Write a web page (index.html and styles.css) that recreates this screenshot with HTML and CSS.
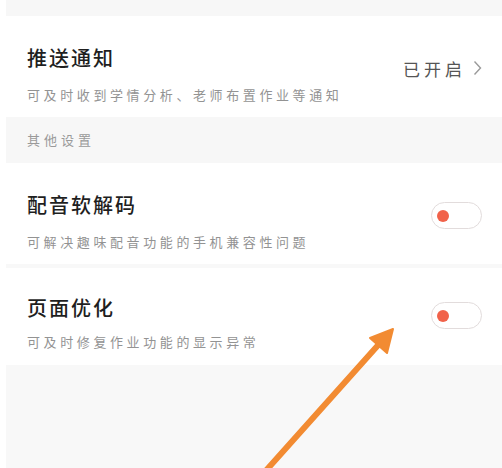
FILE: index.html
```html
<!DOCTYPE html>
<html lang="zh">
<head>
<meta charset="utf-8">
<link rel="stylesheet" href="styles.css">
</head>
<body>
<div class="page">
  <div class="section-head">通知设置</div>
  <div class="row">
    <div class="text">
      <div class="title">推送通知</div>
      <div class="desc">可及时收到学情分析、老师布置作业等通知</div>
    </div>
    <div class="status">
      <span class="status-text">已开启</span>
      <svg class="chev" width="9" height="16" viewBox="0 0 9 16"><polyline points="1.5,1.5 7.5,8 1.5,14.5" fill="none" stroke="#9a9a9a" stroke-width="1.4"/></svg>
    </div>
  </div>
  <div class="section-head">其他设置</div>
  <div class="row">
    <div class="text">
      <div class="title">配音软解码</div>
      <div class="desc">可解决趣味配音功能的手机兼容性问题</div>
    </div>
    <div class="toggle"><span class="dot"></span></div>
  </div>
  <div class="sep"></div>
  <div class="row compact">
    <div class="text">
      <div class="title">页面优化</div>
      <div class="desc">可及时修复作业功能的显示异常</div>
    </div>
    <div class="toggle"><span class="dot"></span></div>
  </div>
  <div class="bottom"></div>
</div>
<svg class="arrow" width="502" height="468" viewBox="0 0 502 468">
  <line x1="262" y1="475" x2="380" y2="343" stroke="#f28b32" stroke-width="6" stroke-linecap="round"/>
  <polygon points="393,329 370,338 387,353" fill="#f28b32" stroke="#f28b32" stroke-width="2" stroke-linejoin="round"/>
</svg>
</body>
</html>
```
FILE: styles.css
```css
html, body {
  margin: 0;
  padding: 0;
  background: #ffffff;
  width: 502px;
  height: 468px;
  overflow: hidden;
}
body {
  position: relative;
  font-family: "Noto Sans CJK SC", "Noto Sans", sans-serif;
}
.page {
  margin-top: -30px;
  margin-left: 6px;
  display: flex;
  flex-direction: column;
}
.section-head {
  height: 46px;
  background: #f7f7f7;
  padding-left: 21px;
  font-size: 13px;
  letter-spacing: 4px;
  color: #9a9a9a;
  line-height: 46px;
  box-sizing: border-box;
}
.row {
  height: 101px;
  background: #ffffff;
  display: flex;
  align-items: flex-start;
  justify-content: space-between;
  padding: 28px 20px 0 21px;
  box-sizing: border-box;
}
.row.compact {
  height: 97px;
  padding-top: 26px;
}
.text {
  display: flex;
  flex-direction: column;
  gap: 14px;
}
.row.compact .text {
  gap: 11px;
}
.title {
  font-size: 20px;
  line-height: 28px;
  font-weight: 500;
  letter-spacing: 2px;
  color: #1f1f1f;
}
.desc {
  font-size: 13px;
  line-height: 18px;
  letter-spacing: 3.6px;
  color: #939393;
}
.status {
  display: flex;
  align-items: center;
  gap: 7px;
  margin-top: 10px;
  height: 28px;
}
.status-text {
  font-size: 17px;
  letter-spacing: 4px;
  color: #555555;
}
.chev {
  display: block;
}
.toggle {
  width: 51px;
  height: 27px;
  border: 1.5px solid #e2dcdc;
  border-radius: 14px;
  box-sizing: border-box;
  margin-top: 11px;
  display: flex;
  align-items: center;
  padding-left: 5px;
}
.row.compact .toggle {
  margin-top: 8px;
}
.dot {
  width: 12px;
  height: 12px;
  border-radius: 50%;
  background: #f1624a;
}
.sep {
  height: 4px;
  background: #f8f8f8;
}
.bottom {
  height: 120px;
  background: #f8f8f8;
}
.arrow {
  position: absolute;
  left: 0;
  top: 0;
  pointer-events: none;
}
```
